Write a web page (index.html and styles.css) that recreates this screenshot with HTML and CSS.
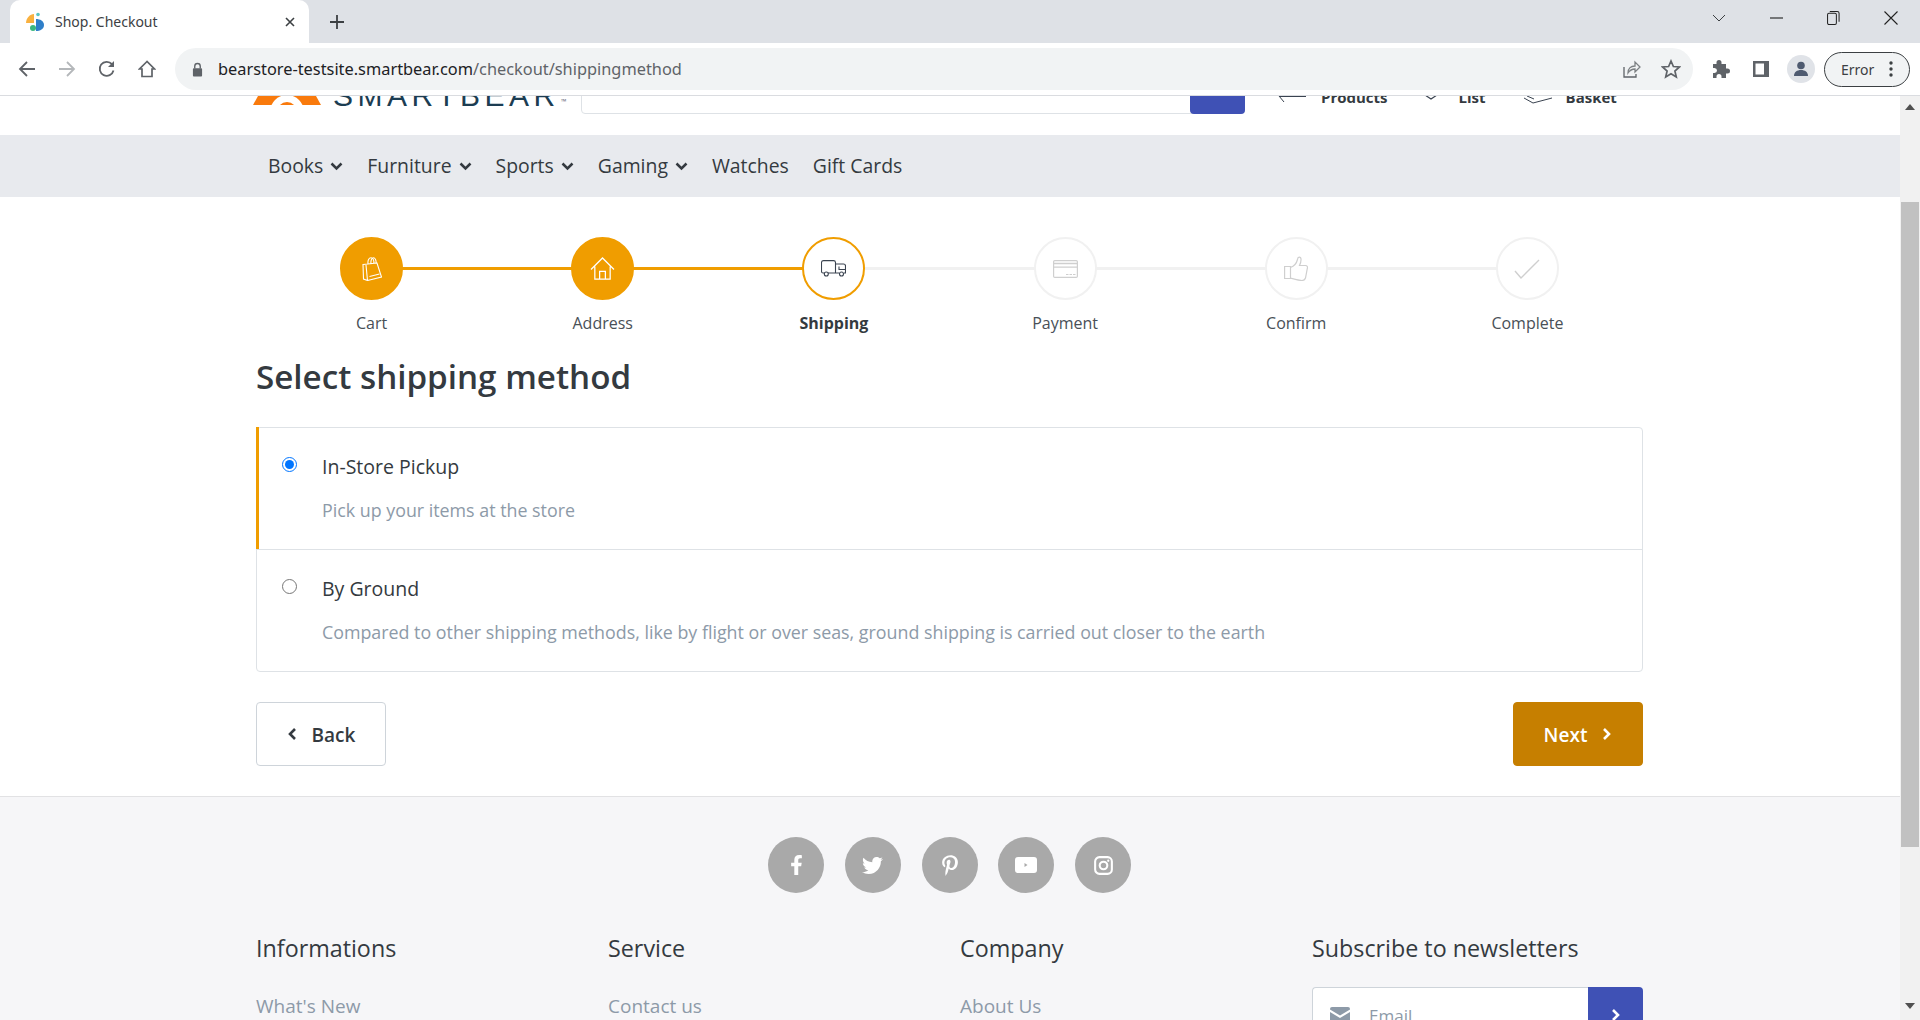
FILE: index.html
```html
<!DOCTYPE html>
<html lang="en">
<head>
<meta charset="utf-8">
<title>Shop. Checkout</title>
<link rel="stylesheet" href="styles.css">
</head>
<body>
<div class="chrome">
  <div class="tabstrip">
    <div class="tab">
      <svg class="favicon" viewBox="0 0 20 20"><path d="M1 11C1 6 5 2 9 2v9z" fill="#f9b13f"/><circle cx="13" cy="2.500" r="1.800" fill="#5ac6c6"/><path d="M11 7c4 0 8 2 8 6s-4 6-8 6z" fill="#2f7fc9"/><circle cx="8" cy="16" r="3" fill="#3bb87f"/></svg>
      <span class="tab-title">Shop. Checkout</span>
      <svg class="tab-close" viewBox="0 0 12 12"><path d="M2 2l8 8M10 2l-8 8" stroke="#3c4043" stroke-width="1.600" fill="none"/></svg>
    </div>
    <div class="new-tab"><svg viewBox="0 0 16 16" width="16" height="16"><path d="M8 1v14M1 8h14" stroke="#3c4043" stroke-width="1.800" fill="none"/></svg></div>
    <div class="win-controls">
      <div class="win-btn"><svg viewBox="0 0 14 8" width="14" height="8"><path d="M1 1l6 6 6-6" stroke="#3c4043" fill="none"/></svg></div>
      <div class="win-btn"><svg viewBox="0 0 14 2" width="13" height="2"><path d="M0 1h14" stroke="#222" stroke-width="1.200"/></svg></div>
      <div class="win-btn"><svg viewBox="0 0 14 16" width="13" height="16"><rect x=".6" y="3" width="9.500" height="12" rx="1.500" fill="none" stroke="#222" stroke-width="1.100"/><path d="M3 1h8a2 2 0 0 1 2 2v9" fill="none" stroke="#222" stroke-width="1.100"/></svg></div>
      <div class="win-btn"><svg viewBox="0 0 14 14" width="14" height="14"><path d="M.5.5l13 13M13.500.500l-13 13" stroke="#222" stroke-width="1.100"/></svg></div>
    </div>
  </div>
  <div class="toolbar">
    <div class="tool"><svg viewBox="0 0 18 18" width="18" height="18"><path d="M17 9H2M9 2L2 9l7 7" fill="none" stroke="#5f6368" stroke-width="1.800"/></svg></div>
    <div class="tool"><svg viewBox="0 0 18 18" width="18" height="18"><path d="M1 9h15M9 2l7 7-7 7" fill="none" stroke="#b4b7ba" stroke-width="1.800"/></svg></div>
    <div class="tool"><svg viewBox="0 0 18 18" width="18" height="18"><path d="M15.500 10.500A7 7 0 1 1 14 4.200" fill="none" stroke="#5f6368" stroke-width="1.800"/><path d="M16 1v6h-6z" fill="#5f6368"/></svg></div>
    <div class="tool"><svg viewBox="0 0 18 18" width="18" height="18"><path d="M9 1.500L1.500 9H4v7.500h10V9h2.500z" fill="none" stroke="#5f6368" stroke-width="1.700"/></svg></div>
    <div class="omnibox">
      <svg class="lock" viewBox="0 0 12 16" width="11" height="15"><path d="M3 7V4.500a3 3 0 0 1 6 0V7" fill="none" stroke="#5f6368" stroke-width="1.500"/><rect x="1" y="6.500" width="10" height="9" rx="1" fill="#5f6368"/></svg>
      <span class="url"><span class="url-host">bearstore-testsite.smartbear.com</span>/checkout/shippingmethod</span>
      <div class="tool tool-end"><svg viewBox="0 0 20 20" width="20" height="20"><path d="M3 8v10h12v-3" fill="none" stroke="#5f6368" stroke-width="1.300"/><path d="M7 14c0-5 3-7 7-7V3l5 5-5 5V10c-3 0-5 1-7 4z" fill="none" stroke="#7d8184" stroke-width="1.300"/></svg></div>
      <div class="tool"><svg viewBox="0 0 20 20" width="20" height="20"><path d="M10 2l2.400 5.500 6 .5-4.500 4 1.400 6L10 14.800 4.700 18l1.400-6L1.600 8l6-.5z" fill="none" stroke="#5f6368" stroke-width="1.700"/></svg></div>
    </div>
    <div class="tool"><svg viewBox="0 0 20 20" width="20" height="20"><path d="M8 1a2.500 2.500 0 0 1 2.500 2.500V5H15v4.500h1.500a2.500 2.500 0 0 1 0 5H15V19H10.500v-1.500a2.500 2.500 0 0 0-5 0V19H2v-5h1.500a2.500 2.500 0 0 0 0-5H2V5h3.500V3.500A2.500 2.500 0 0 1 8 1z" fill="#5f6368"/></svg></div>
    <div class="tool"><svg viewBox="0 0 18 18" width="18" height="18"><path d="M1 1h16v16H1zM3.500 3.500v11H12v-11z" fill="#5f6368" fill-rule="evenodd"/></svg></div>
    <div class="tool"><div class="avatar"><svg viewBox="0 0 20 20" width="20" height="20"><circle cx="10" cy="6.500" r="3.800" fill="#4e5a70"/><path d="M3 17c0-4 3-6 7-6s7 2 7 6z" fill="#4e5a70"/></svg></div></div>
    <div class="error-pill"><span>Error</span><svg viewBox="0 0 4 16" width="4" height="16"><circle cx="2" cy="2" r="1.700" fill="#3c4043"/><circle cx="2" cy="8" r="1.700" fill="#3c4043"/><circle cx="2" cy="14" r="1.700" fill="#3c4043"/></svg></div>
  </div>
</div>

<div class="viewport">
  <div class="page">
    <header class="site-header">
      <svg class="logo-mark" viewBox="0 0 68 9" width="68" height="9"><path d="M5 0h58l5 9H0z" fill="#f97a0c"/><circle cx="34" cy="16" r="17" fill="#fff"/><circle cx="34" cy="16" r="10" fill="#f97a0c"/></svg>
      <span class="logo-text">SMARTBEAR</span><span class="logo-tm">™</span>
      <div class="search"><div class="search-btn"><svg viewBox="0 0 10 10" width="10" height="10"><path d="M1 1l7 7" stroke="#fff" stroke-width="2"/></svg></div></div>
      <div class="hdr-tool hdr-compare"><svg viewBox="0 0 28 6" width="28" height="6"><path d="M1 0l5 6M1 .5h27" fill="none" stroke="#3a4350"/></svg><span>Products</span></div>
      <div class="hdr-tool hdr-list"><svg viewBox="0 0 14 5" width="14" height="5"><path d="M1 0l6 4 6-4" fill="none" stroke="#3a4350" stroke-width="1.200"/></svg><span>List</span></div>
      <div class="hdr-tool hdr-basket"><svg viewBox="0 0 30 8" width="30" height="8"><path d="M1 2l9 5 19-5M4 0l7 3" fill="none" stroke="#3a4350"/></svg><span>Basket</span></div>
    </header>

    <nav class="mainnav">
      <a class="nav-item">Books<svg class="caret" viewBox="0 0 10 8"><path d="M1 2l4 4 4-4" fill="none" stroke="currentColor" stroke-width="2"/></svg></a>
      <a class="nav-item">Furniture<svg class="caret" viewBox="0 0 10 8"><path d="M1 2l4 4 4-4" fill="none" stroke="currentColor" stroke-width="2"/></svg></a>
      <a class="nav-item">Sports<svg class="caret" viewBox="0 0 10 8"><path d="M1 2l4 4 4-4" fill="none" stroke="currentColor" stroke-width="2"/></svg></a>
      <a class="nav-item">Gaming<svg class="caret" viewBox="0 0 10 8"><path d="M1 2l4 4 4-4" fill="none" stroke="currentColor" stroke-width="2"/></svg></a>
      <a class="nav-item">Watches</a>
      <a class="nav-item">Gift Cards</a>
    </nav>

    <main class="content">
      <ol class="steps">
        <li class="step done"><span class="step-circle"><svg viewBox="0 0 20 24" width="20" height="24"><path d="M1 7.500l14-1.500 4.500 14-14 3.500-4-1.500zM5.500 23.500L4 8M7.500 19.500l10-2.500M6 7.500C5.500 3 7 .8 9 .8s3 2.500 3 6M9 7C8.500 3 10 .8 11.500 .8s3 2.500 2.500 5.500" fill="none" stroke="#fff" stroke-width="1.100"/></svg></span><span class="step-label">Cart</span></li>
        <li class="step done"><span class="step-circle"><svg viewBox="1 2 26 24" width="25" height="23"><path d="M2 15L14 3l12 12M6 12v13h16V12M11 25v-8h6v8" fill="none" stroke="#fff" stroke-width="1.300"/></svg></span><span class="step-label">Address</span></li>
        <li class="step current"><span class="step-circle"><svg viewBox="0 0 25 17" width="25" height="17"><path d="M3.500 13H2a1.500 1.500 0 0 1-1.500-1.500v-9A2 2 0 0 1 2.500.6h10A2 2 0 0 1 14.500 2.500V13H7M14.500 4h8a2 2 0 0 1 2 2v7h-1.500M14.500 13H18M18 6.500v3h6" fill="none" stroke="#3a4350" stroke-width="1.100"/><circle cx="5.300" cy="14" r="2" fill="none" stroke="#3a4350" stroke-width="1.100"/><circle cx="20.500" cy="14" r="2" fill="none" stroke="#3a4350" stroke-width="1.100"/></svg></span><span class="step-label">Shipping</span></li>
        <li class="step"><span class="step-circle"><svg viewBox="0 0 25 18" width="25" height="18"><rect x=".6" y=".6" width="23.800" height="16.800" rx="1.200" fill="none" stroke="#cfcfcf" stroke-width="1.200"/><path d="M.6 3.500h23.800M.6 7.200h23.800" stroke="#cfcfcf" stroke-width="1.300"/><path d="M13 14.500h9.500" stroke="#cfcfcf" stroke-dasharray="2.500 1"/></svg></span><span class="step-label">Payment</span></li>
        <li class="step"><span class="step-circle"><svg viewBox="0 0 24 25" width="24" height="25"><path d="M.6 10.500h5.900v12H.6zM6.500 11.500c4-1.500 6-4 7-8 .2-3 3.200-3.300 3.500-.5.200 2.500-.5 4.500-1.500 6.500h6c1.800 0 2.300 1.600 1.800 3l-1.800 9.500c-.7 2-1.500 2.500-3.500 2.500-3.500 0-7-1.500-11.500-2.300" fill="none" stroke="#cfcfcf" stroke-width="1.200"/></svg></span><span class="step-label">Confirm</span></li>
        <li class="step"><span class="step-circle"><svg viewBox="0 0 26 20" width="26" height="20"><path d="M1 12l6 7L25 1" fill="none" stroke="#cfcfcf" stroke-width="1.400"/></svg></span><span class="step-label">Complete</span></li>
      </ol>

      <h1 class="page-title">Select shipping method</h1>

      <div class="methods">
        <label class="method selected">
          <input class="method-radio" type="radio" name="method" checked>
          <span class="method-body"><span class="method-title">In-Store Pickup</span><span class="method-desc">Pick up your items at the store</span></span>
        </label>
        <label class="method">
          <input class="method-radio" type="radio" name="method">
          <span class="method-body"><span class="method-title">By Ground</span><span class="method-desc">Compared to other shipping methods, like by flight or over seas, ground shipping is carried out closer to the earth</span></span>
        </label>
      </div>

      <div class="actions">
        <button class="btn btn-back"><svg viewBox="0 0 10 14" width="10" height="14"><path d="M8 2L3 7l5 5" fill="none" stroke="currentColor" stroke-width="2.600"/></svg><span class="btn-text">Back</span></button>
        <button class="btn btn-next"><span class="btn-text">Next</span><svg viewBox="0 0 10 14" width="10" height="14"><path d="M2 2l5 5-5 5" fill="none" stroke="currentColor" stroke-width="2.600"/></svg></button>
      </div>
    </main>

    <footer class="footer">
      <div class="social">
        <span class="social-btn"><svg viewBox="0 0 320 512" width="13" height="20"><path fill="#fff" d="M279.14 288l14.22-92.66h-88.91v-60.13c0-25.35 12.42-50.06 52.24-50.06h40.42V6.26S260.43 0 225.36 0c-73.22 0-121.08 44.38-121.08 124.72v70.62H22.89V288h81.39v224h100.17V288z"/></svg></span>
        <span class="social-btn"><svg viewBox="0 0 512 512" width="21" height="21"><path fill="#fff" d="M459.37 151.716c.325 4.548.325 9.097.325 13.645 0 138.72-105.583 298.558-298.558 298.558-59.452 0-114.68-17.219-161.137-47.106 8.447.974 16.568 1.299 25.34 1.299 49.055 0 94.213-16.568 130.274-44.832-46.132-.975-84.792-31.188-98.112-72.772 6.498.974 12.995 1.624 19.818 1.624 9.421 0 18.843-1.3 27.614-3.573-48.081-9.747-84.143-51.98-84.143-102.985v-1.299c13.969 7.797 30.214 12.67 47.431 13.319-28.264-18.843-46.781-51.005-46.781-87.391 0-19.492 5.197-37.36 14.294-52.954 51.655 63.675 129.3 105.258 216.365 109.807-1.624-7.797-2.599-15.918-2.599-24.04 0-57.828 46.782-104.934 104.934-104.934 30.213 0 57.502 12.67 76.67 33.137 23.715-4.548 46.456-13.32 66.599-25.34-7.798 24.366-24.366 44.833-46.132 57.827 21.117-2.273 41.584-8.122 60.426-16.243-14.292 20.791-32.161 39.308-52.628 54.253z"/></svg></span>
        <span class="social-btn"><svg viewBox="0 0 384 512" width="16" height="21"><path fill="#fff" d="M204 6.500C101.400 6.500 0 74.900 0 185.600 0 256 39.600 296 63.600 296c9.900 0 15.600-27.600 15.600-35.400 0-9.300-23.700-29.100-23.700-67.800 0-80.400 61.200-137.400 140.400-137.400 68.100 0 118.500 38.700 118.500 109.800 0 53.100-21.300 152.700-90.300 152.700-24.900 0-46.200-18-46.200-43.800 0-37.800 26.400-74.400 26.400-113.400 0-66.200-93.900-54.200-93.900 25.800 0 16.800 2.100 35.400 9.600 50.700-13.800 59.400-42 147.900-42 209.100 0 18.900 2.700 37.500 4.500 56.400 3.400 3.800 1.700 3.400 6.900 1.500 50.400-69 48.600-82.500 71.400-172.800 12.300 23.400 44.100 36 69.300 36 106.200 0 153.900-103.500 153.900-196.800C384 71.300 298.200 6.500 204 6.500z"/></svg></span>
        <span class="social-btn"><svg viewBox="0 0 22 16" width="22" height="16"><path fill="#fff" fill-rule="evenodd" d="M3 0h16a3 3 0 0 1 3 3v10a3 3 0 0 1-3 3H3a3 3 0 0 1-3-3V3a3 3 0 0 1 3-3zM9.500 6v4l3-2z"/></svg></span>
        <span class="social-btn"><svg viewBox="0 0 20 20" width="19" height="19"><rect x="1.200" y="1.200" width="17.600" height="17.600" rx="4.500" fill="none" stroke="#fff" stroke-width="2.200"/><circle cx="10" cy="10" r="4" fill="none" stroke="#fff" stroke-width="2.200"/><circle cx="15" cy="5" r="1.200" fill="#fff"/></svg></span>
      </div>
      <div class="footer-cols">
        <div class="footer-col"><h2 class="footer-head">Informations</h2><a class="footer-link">What's New</a></div>
        <div class="footer-col"><h2 class="footer-head">Service</h2><a class="footer-link">Contact us</a></div>
        <div class="footer-col"><h2 class="footer-head">Company</h2><a class="footer-link">About Us</a></div>
        <div class="footer-col">
          <h2 class="footer-head">Subscribe to newsletters</h2>
          <div class="subscribe">
            <div class="sub-input"><svg viewBox="0 0 20 16" width="20" height="16"><path fill="#8d9aa8" d="M0 2a2 2 0 0 1 2-2h16a2 2 0 0 1 2 2v.500l-10 6-10-6zM0 5l10 6 10-6v9a2 2 0 0 1-2 2H2a2 2 0 0 1-2-2z"/></svg><span>Email</span></div>
            <div class="sub-btn"><svg viewBox="0 0 10 14" width="10" height="14"><path d="M2 2l5 5-5 5" fill="none" stroke="#fff" stroke-width="2.600"/></svg></div>
          </div>
        </div>
      </div>
    </footer>
  </div>
  <div class="scrollbar">
    <div class="sb-arrow"><svg viewBox="0 0 10 6" width="10" height="6"><path d="M5 0l5 6H0z" fill="#505050"/></svg></div>
    <div class="sb-thumb"></div>
    <div class="sb-arrow sb-arrow-down"><svg viewBox="0 0 10 6" width="10" height="6"><path d="M0 0h10L5 6z" fill="#505050"/></svg></div>
  </div>
</div>
</body>
</html>
```
FILE: styles.css
```css
* { box-sizing: border-box; }
html, body { margin: 0; height: 100%; overflow: hidden; }
body { font-family: "Open Sans", "Noto Sans", sans-serif; color: #343a40; background: #fff; }
svg { display: block; flex: none; }

.chrome { height: 96px; font-family: "Noto Sans", sans-serif; }
.tabstrip { height: 43px; background: #dee1e6; display: flex; padding-left: 10px; }
.tab { width: 299px; height: 43px; background: #fff; border-radius: 10px 10px 0 0; display: flex; align-items: center; padding: 0 13px 0 15px; }
.favicon { width: 20px; height: 20px; }
.tab-title { font-size: 14px; margin-left: 10px; color: #3c4043; flex: 1; }
.tab-close { width: 12px; height: 12px; }
.new-tab { width: 56px; display: flex; align-items: center; justify-content: center; }
.win-controls { margin-left: auto; display: flex; }
.win-btn { width: 57.500px; height: 36px; display: flex; align-items: center; justify-content: center; }

.toolbar { height: 53px; padding: 5px 10px 5px 7px; background: #fff; border-bottom: 1px solid #dadce0; display: flex; align-items: center; }
.tool { width: 40px; height: 40px; display: flex; align-items: center; justify-content: center; flex: none; }
.omnibox { flex: 1; height: 42px; margin: 0 8px; padding: 0 2px 0 17px; background: #f1f3f4; border-radius: 21px; display: flex; align-items: center; }
.lock { margin-right: 15px; }
.url { flex: 1; font-size: 16.350px; color: #5f6368; }
.url-host { color: #202124; }
.avatar { width: 28px; height: 28px; border-radius: 50%; background: #e0e3e8; display: flex; align-items: center; justify-content: center; }
.error-pill { width: 86px; height: 35px; margin-left: 3px; border: 1.500px solid #3c4043; border-radius: 18px; background: #f1f3f4; display: flex; align-items: center; justify-content: space-between; padding: 0 16px; font-size: 14px; color: #3c4043; }

.viewport { height: 924px; display: flex; overflow: hidden; }
.page { width: 1900px; flex: none; overflow: hidden; }

.site-header { height: 39px; overflow: hidden; display: flex; align-items: flex-end; padding-left: 253px; }
.logo-mark { margin-bottom: 30px; }
.logo-text { width: 228px; margin: 0 0 24px 12px; font: 30px/30px "Liberation Sans", sans-serif; letter-spacing: 4.500px; color: #1c3d52; white-space: nowrap; }
.logo-tm { width: 8px; font-size: 7px; line-height: 9px; margin-bottom: 29px; color: #667; }
.search { width: 664px; height: 60px; margin: 0 0 21px 12px; border: 1px solid #dee2e6; border-radius: 4px; display: flex; justify-content: flex-end; align-items: flex-end; }
.search-btn { width: 55px; height: 60px; margin: 0 -1px -1px 0; background: #3f51b5; border-radius: 0 0 4px 4px; display: flex; align-items: flex-start; padding: 33px 0 0 28px; }
.hdr-tool { display: flex; align-items: flex-end; font-size: 15px; font-weight: 700; line-height: 20px; margin-bottom: 28px; color: #343a40; }
.hdr-compare { margin-left: 33px; gap: 15px; }
.hdr-compare svg { margin-bottom: 5px; }
.hdr-list { margin-left: 36px; gap: 21px; }
.hdr-list svg { margin-bottom: 7px; }
.hdr-basket { margin-left: 37px; gap: 13px; }
.hdr-basket svg { margin-bottom: 3px; }

.mainnav { height: 62px; background: #e8eaee; display: flex; align-items: center; padding: 0 0 1px 268px; gap: 24px; }
.nav-item { display: flex; align-items: center; gap: 7px; font-size: 19.400px; color: #343a40; }
.caret { width: 13px; height: 10px; }

.content { width: 1387px; margin-left: 256px; padding: 40px 0 30px; }
.steps { list-style: none; margin: 0; padding: 0; display: grid; grid-template-columns: repeat(6, 1fr); }
.step { position: relative; display: flex; flex-direction: column; align-items: center; }
.step:not(:last-child)::after { content: ""; position: absolute; left: 50%; width: 100%; top: 30px; height: 3px; background: #f1f1f1; }
.step.done::after { background: #f09d00; }
.step-circle { position: relative; z-index: 1; width: 63px; height: 63px; border-radius: 50%; background: #fff; border: 2px solid #f1f1f1; display: flex; align-items: center; justify-content: center; }
.done .step-circle { background: #f09d00; border-color: #f09d00; }
.current .step-circle { border-color: #f09d00; }
.step-label { margin-top: 12px; font-size: 16px; line-height: 22px; color: #495057; }
.current .step-label { font-weight: 700; color: #343a40; }

.page-title { margin: 21px 0 0; font-size: 33.200px; line-height: 44px; font-weight: 600; color: #343a40; }

.methods { margin-top: 28px; border: 1px solid #dee2e6; border-radius: 4px; }
.method { position: relative; height: 121px; display: flex; padding: 27px 0 0 26px; gap: 24px; }
.method + .method { height: 122px; border-top: 1px solid #dee2e6; }
.method.selected::before { content: ""; position: absolute; left: -1px; top: -1px; bottom: 0; width: 3px; background: #f09d00; }
.method-radio { width: 15px; height: 15px; margin: 2px 0 0 -1px; accent-color: #0075ff; }
.method-body { display: flex; flex-direction: column; gap: 19px; padding-left: 1px; }
.method-title { font-size: 19.500px; line-height: 24px; font-weight: 500; color: #343a40; }
.method-desc { font-size: 17.830px; line-height: 24px; color: #8d9aa8; }

.actions { display: flex; justify-content: space-between; margin-top: 30px; }
.btn { width: 130px; height: 64px; border-radius: 4px; font: 600 19px "Open Sans", sans-serif; display: flex; align-items: center; justify-content: center; gap: 15px; cursor: pointer; }
.btn-text { padding-top: 2px; }
.btn-back { background: #fff; border: 1px solid #ced4da; color: #343a40; }
.btn-next { background: #c67f00; border: 1px solid #c67f00; color: #fff; }

.footer { border-top: 1px solid #e2e2e4; background: #f6f6f8; padding-top: 40px; height: 300px; }
.social { display: flex; gap: 20.800px; padding-left: 768px; }
.social-btn { width: 56px; height: 56px; border-radius: 50%; background: #a9a9a9; display: flex; align-items: center; justify-content: center; }
.footer-cols { width: 1387px; margin: 40px 0 0 256px; display: grid; grid-template-columns: repeat(3, 352px) 331px; }
.footer-head { margin: 0; font-size: 23.300px; line-height: 30px; font-weight: 400; color: #343a40; }
.footer-link { display: block; margin-top: 31px; font-size: 19px; line-height: 24px; color: #8d9aa8; }
.subscribe { display: flex; margin-top: 24px; height: 56px; }
.sub-input { flex: 1; background: #fff; border: 1px solid #ced4da; border-right: 0; border-radius: 4px 0 0 4px; display: flex; align-items: center; gap: 19px; padding-left: 17px; font-size: 17px; color: #8d9aa8; }
.sub-btn { width: 55px; background: #3f51b5; border-radius: 0 4px 4px 0; display: flex; align-items: center; justify-content: center; }

.scrollbar { width: 20px; flex: none; background: #f1f1f1; display: flex; flex-direction: column; align-items: center; height: 924px; }
.sb-arrow { height: 20px; display: flex; align-items: center; justify-content: center; flex: none; margin-bottom: 86px; padding-top: 2px; }
.sb-arrow-down { margin: auto 0 0; padding: 0 0 8px; }
.sb-thumb { width: 18px; height: 645px; background: #c1c1c1; flex: none; }
```
